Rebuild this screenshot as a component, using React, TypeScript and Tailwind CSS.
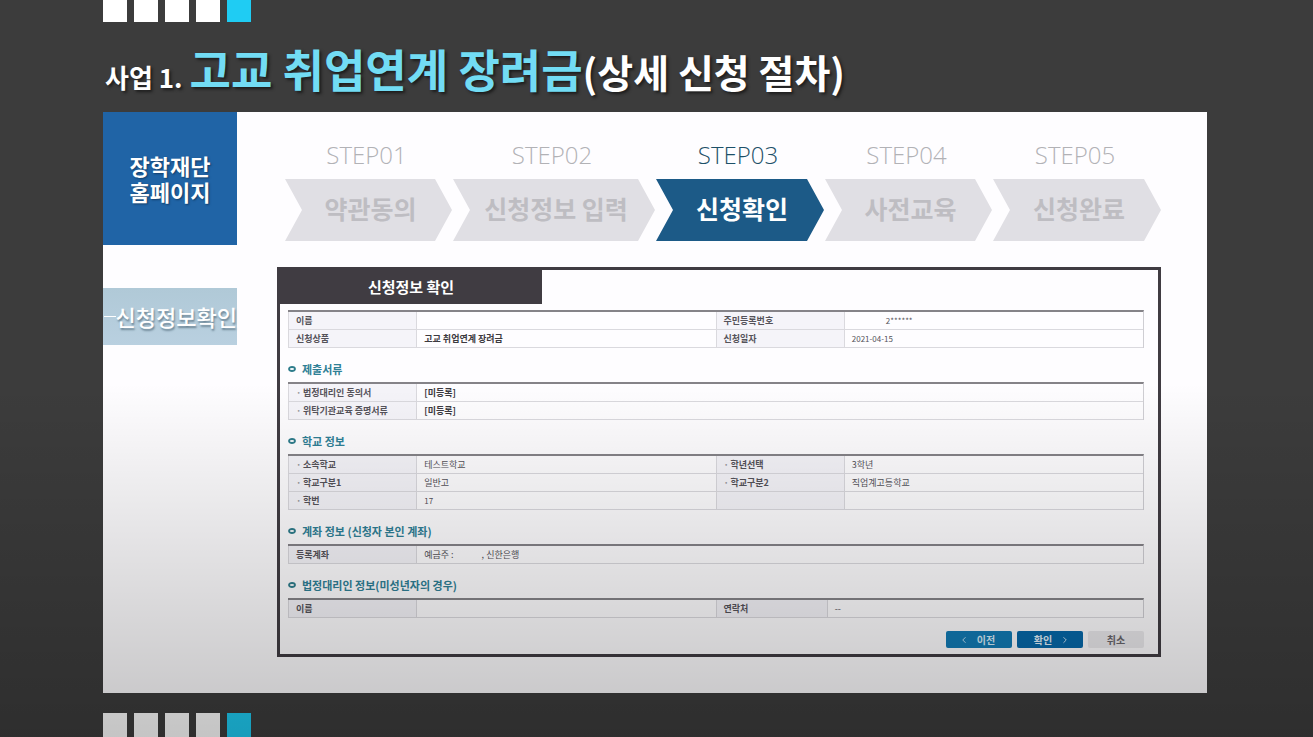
import { ReactNode } from "react";
import clsx from "clsx";
import { ChevronLeft, ChevronRight } from "lucide-react";

const steps = [
  { step: "STEP01", name: "약관동의" },
  { step: "STEP02", name: "신청정보 입력" },
  { step: "STEP03", name: "신청확인", active: true },
  { step: "STEP04", name: "사전교육" },
  { step: "STEP05", name: "신청완료" },
];

const Squares = ({ className }: { className: string }) => (
  <div className={clsx("flex gap-[7px]", className)}>
    <div className="w-6 bg-white" />
    <div className="w-6 bg-white" />
    <div className="w-6 bg-white" />
    <div className="w-6 bg-white" />
    <div className="w-6 bg-[#1fccf3]" />
  </div>
);

const StepBar = () => (
  <ol className="ml-2 grid grid-cols-[167fr_202fr_168fr_167fr_168fr] gap-px">
    {steps.map(({ step, name, active }) => (
      <li key={step} className="text-center">
        <p
          className={clsx(
            "pr-1 font-['Open_Sans',sans-serif] text-2xl font-light leading-8",
            active ? "text-[#1d5068]" : "text-[#b2b2b6]"
          )}
        >
          {step}
        </p>
        <div
          className={clsx(
            "mt-2 flex h-[62px] items-center justify-center pb-[2px] pl-1 text-[25px] font-bold [clip-path:polygon(0_0,calc(100%-17px)_0,100%_50%,calc(100%-17px)_100%,0_100%,17px_50%)]",
            active ? "bg-[#1c5a87] text-white" : "bg-[#e0dfe4] text-[#bebdc2]"
          )}
        >
          {name}
        </div>
      </li>
    ))}
  </ol>
);

const SectionTitle = ({ children }: { children: ReactNode }) => (
  <h3 className="flex h-[34px] items-center gap-[6px] pt-2 text-[11px] font-bold text-[#2f8096]">
    <svg viewBox="0 0 8 6" className="h-[6px] w-2" fill="none" stroke="#2f7d8c" strokeWidth="1.8">
      <ellipse cx="4" cy="3" rx="3" ry="2" />
    </svg>
    {children}
  </h3>
);

const InfoTable = ({ narrow, children }: { narrow?: boolean; children: ReactNode }) => (
  <table className="w-full table-fixed border-separate border-spacing-0 border-t-2 border-r border-t-[#858388] border-r-[#cfced3] text-left text-[9px] leading-[17px]">
    <colgroup>
      <col className="w-[15%]" />
      <col className="w-[35%]" />
      <col className={narrow ? "w-[13%]" : "w-[15%]"} />
      <col className={narrow ? "w-[37%]" : "w-[35%]"} />
    </colgroup>
    <tbody>{children}</tbody>
  </table>
);

const Label = ({ dot, children }: { dot?: boolean; children?: ReactNode }) => (
  <th
    scope="row"
    className="h-[18px] border-b border-l border-[#dad9de] bg-[#f5f4f9] py-0 pr-0 pl-[7px] font-bold text-[#55535a]"
  >
    {dot && <span className="inline-block w-[7px] text-[#99979c]">·</span>}
    {children}
  </th>
);

const Value = ({
  span,
  strong,
  numeric,
  children,
}: {
  span?: number;
  strong?: boolean;
  numeric?: boolean;
  children?: ReactNode;
}) => (
  <td
    colSpan={span}
    className={clsx(
      "h-[18px] border-b border-l border-[#dad9de] px-[7px] py-0",
      strong ? "font-bold text-[#3c3a40]" : "text-[#55535a]",
      numeric && "text-[8px]"
    )}
  >
    {children}
  </td>
);

const ConfirmPanel = () => (
  <section className="mt-[26px] border-[3px] border-[#403c42] pr-[14px] pb-[6px] pl-2">
    <h2 className="-ml-2 h-[34px] w-[262px] bg-[#403c42] text-center text-[15px] leading-[34px] font-bold text-white">
      신청정보 확인
    </h2>

    <div className="mt-[6px]">
      <InfoTable>
        <tr>
          <Label>이름</Label>
          <Value />
          <Label>주민등록번호</Label>
          <Value numeric>
            <span className="pl-[34px]">2******</span>
          </Value>
        </tr>
        <tr>
          <Label>신청상품</Label>
          <Value strong>고교 취업연계 장려금</Value>
          <Label>신청일자</Label>
          <Value numeric>2021-04-15</Value>
        </tr>
      </InfoTable>
    </div>

    <SectionTitle>제출서류</SectionTitle>
    <InfoTable>
      <tr>
        <Label dot>법정대리인 동의서</Label>
        <Value span={3} strong>[미등록]</Value>
      </tr>
      <tr>
        <Label dot>위탁기관교육 증명서류</Label>
        <Value span={3} strong>[미등록]</Value>
      </tr>
    </InfoTable>

    <SectionTitle>학교 정보</SectionTitle>
    <InfoTable>
      <tr>
        <Label dot>소속학교</Label>
        <Value>테스트학교</Value>
        <Label dot>학년선택</Label>
        <Value>3학년</Value>
      </tr>
      <tr>
        <Label dot>학교구분1</Label>
        <Value>일반고</Value>
        <Label dot>학교구분2</Label>
        <Value>직업계고등학교</Value>
      </tr>
      <tr>
        <Label dot>학번</Label>
        <Value numeric>17</Value>
        <Label />
        <Value />
      </tr>
    </InfoTable>

    <SectionTitle>계좌 정보 (신청자 본인 계좌)</SectionTitle>
    <InfoTable>
      <tr>
        <Label>등록계좌</Label>
        <Value span={3}>
          예금주 :<span className="pl-7">, 신한은행</span>
        </Value>
      </tr>
    </InfoTable>

    <SectionTitle>법정대리인 정보(미성년자의 경우)</SectionTitle>
    <InfoTable narrow>
      <tr>
        <Label>이름</Label>
        <Value />
        <Label>연락처</Label>
        <Value>--</Value>
      </tr>
    </InfoTable>

    <div className="mt-[13px] flex justify-end gap-[5px] text-[10px] leading-[17px] font-bold">
      <button type="button" className="flex h-[17px] w-[66px] items-center justify-center gap-2 rounded-xs bg-[#127bb5] pr-1 text-[#d8eefa]">
        <ChevronLeft className="size-[10px]" />
        이전
      </button>
      <button type="button" className="flex h-[17px] w-[66px] items-center justify-center gap-2 rounded-xs bg-[#0668a9] pl-1 text-[#e4f2fb]">
        확인
        <ChevronRight className="size-[10px]" />
      </button>
      <button type="button" className="h-[17px] w-14 rounded-xs bg-[#ebeaed] text-[#67656b]">
        취소
      </button>
    </div>
  </section>
);

const App = () => {
  return (
    <div className="relative min-h-screen overflow-hidden bg-[#3c3c3c] pr-[106px] pl-[103px] font-['Noto_Sans_CJK_KR',sans-serif]">
      <Squares className="h-[22px]" />

      <h1 className="flex h-[90px] items-baseline pl-[2px] font-bold whitespace-nowrap text-white [text-shadow:2px_2px_3px_#1c1c1c]">
        <span className="text-[26px]">사업 1.</span>
        <span className="ml-[7px] text-[45px] leading-[94px] text-[#72dcf4]">고교 취업연계 장려금</span>
        <span className="text-[39px]">(상세 신청 절차)</span>
      </h1>

      <main className="flex bg-[#fefdff] pb-9">
        <aside className="w-[134px] shrink-0">
          <div className="flex h-[133px] flex-col items-center justify-center bg-[#2064a6] pb-[2px] text-[22px] leading-[26px] font-bold text-white [text-shadow:1px_1px_2px_#123c66]">
            <span>장학재단</span>
            <span>홈페이지</span>
          </div>
          <div className="mt-[43px] flex h-[57px] items-center justify-end bg-linear-to-b from-[#b0c9d7] to-[#b9d0e0] text-[22px] font-medium whitespace-nowrap text-white [text-shadow:1px_2px_2px_#6b8494]">
            <span className="h-px w-3 bg-white" />
            신청정보확인
          </div>
        </aside>

        <div className="mr-[46px] ml-10 min-w-0 grow pt-[27px]">
          <StepBar />
          <ConfirmPanel />
        </div>
      </main>

      <Squares className="mt-5 h-6" />

      {/* shade that darkens the lower half of the slide */}
      <div className="pointer-events-none absolute inset-0 bg-linear-to-b from-transparent from-52% to-black/23" />
    </div>
  );
};

export default App;
